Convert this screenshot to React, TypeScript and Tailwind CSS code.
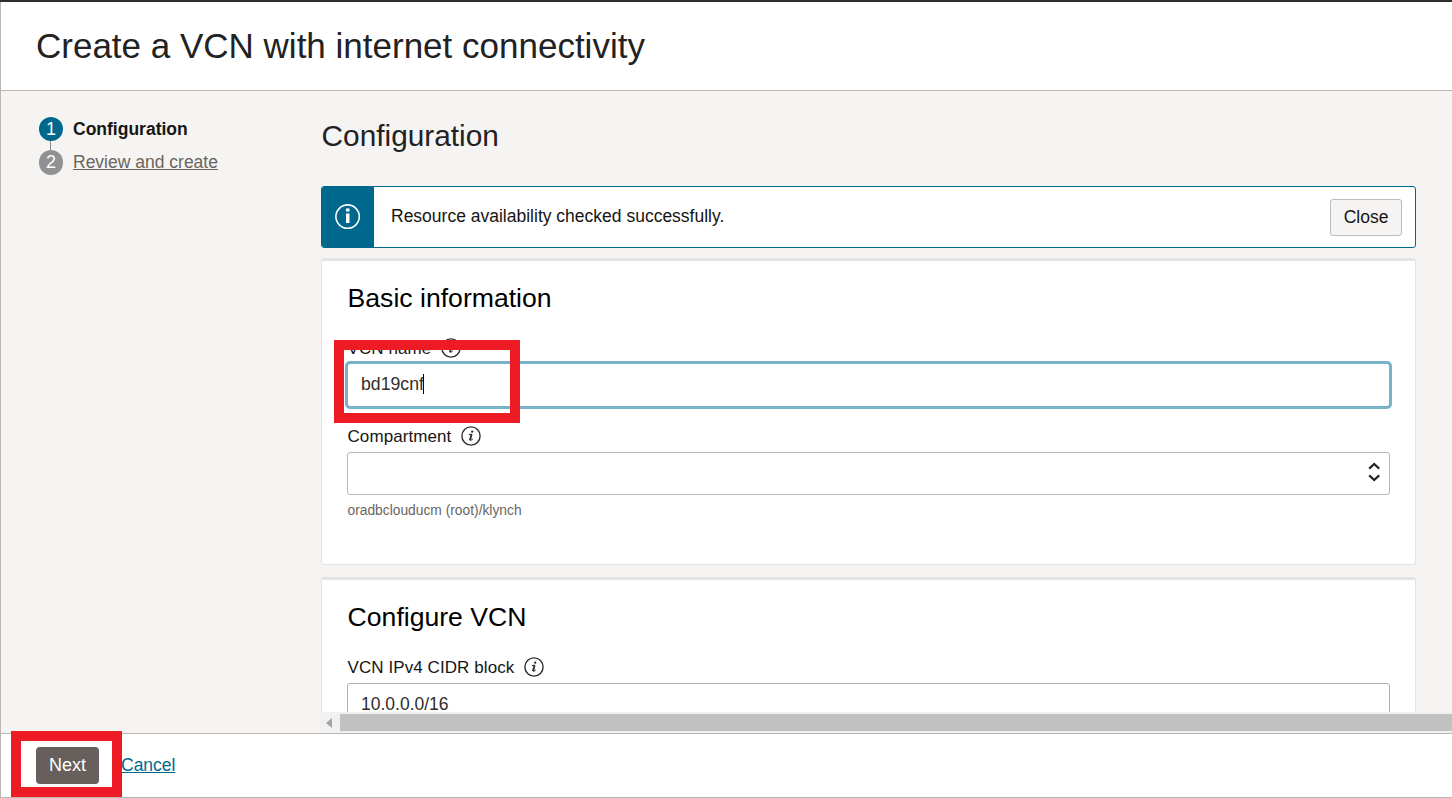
import type { ReactNode } from "react";

function InfoIcon() {
  return (
    <svg className="ml-[9.7px] h-5 w-5 shrink-0" viewBox="0 0 20 20" fill="none">
      <circle cx="10" cy="10" r="9.1" stroke="#312d2a" strokeWidth="1.4" />
      <circle cx="11.2" cy="5.6" r="1.2" fill="#312d2a" />
      <path d="M7.8 8.6 L10.6 8.2 M9.1 14.1 Q9.7 14.8 11.8 13" stroke="#312d2a" strokeWidth="1" />
      <path d="M10.6 8 L9 14.3" stroke="#312d2a" strokeWidth="1.9" />
    </svg>
  );
}

function Label({ children }: { children: ReactNode }) {
  return (
    <div className="flex h-5 items-center pl-[0.5px] text-[17px] leading-5 tracking-[0.08px] text-[#161513]">
      <span className="pt-px">{children}</span>
      <InfoIcon />
    </div>
  );
}

function Card({ title, className, children }: { title: string; className: string; children: ReactNode }) {
  return (
    <section
      className={`shrink-0 rounded-[3px] border border-t-[3px] border-[#e2e4e6] bg-white pr-[25px] pl-[25px] ${className}`}
    >
      <h3 className="pt-[21px] pl-[0.6px] text-[26.6px] leading-8 text-black">{title}</h3>
      {children}
    </section>
  );
}

function Steps() {
  return (
    <nav className="w-[320px] shrink-0 pt-[26px] pl-[38px] text-[17.5px]">
      <div className="flex h-6 items-center">
        <span className="flex h-6 w-6 items-center justify-center rounded-full bg-[#00688c] text-[18px] text-white">1</span>
        <span className="ml-[10px] font-bold text-[#161513]">Configuration</span>
      </div>
      <div className="ml-[11px] h-[9px] w-px bg-[#8b8b8b]" />
      <div className="flex h-[25px] items-center">
        <span className="flex h-[25px] w-6 items-center justify-center rounded-full bg-[#919191] text-[18px] text-white">2</span>
        <a className="ml-[10px] text-[#6b6560] underline underline-offset-1">Review and create</a>
      </div>
    </nav>
  );
}

function Notice() {
  return (
    <div className="mt-[32px] flex h-[62px] shrink-0 overflow-hidden rounded-[3px] border border-[#00688c] bg-white">
      <div className="flex w-[52px] items-center justify-center bg-[#00688c] pr-px pb-px">
        <svg className="h-[26px] w-[26px]" viewBox="0 0 26 26" fill="none">
          <circle cx="12.6" cy="12.6" r="11.7" stroke="white" strokeWidth="1.6" />
          <path d="M11 4.6h3.5v3H11zM11 9.4h3.5v9.7H11z" fill="white" />
        </svg>
      </div>
      <p className="flex-1 pt-[17px] pl-[17px] text-[17.5px] leading-6 text-[#161513]">
        Resource availability checked successfully.
      </p>
      <button className="mt-3 mr-[13px] h-[37px] w-[72px] rounded-[3px] border border-[#b9bcc0] bg-[#f5f4f2] text-[17.5px] text-[#161513]">
        Close
      </button>
    </div>
  );
}

export default function App() {
  return (
    <div className="relative flex h-[798px] w-full flex-col overflow-hidden border-t-2 border-t-[#312d2a] bg-white font-['Liberation_Sans',Arial,sans-serif]">
      <div className="flex min-h-0 flex-1 flex-col border-b border-l border-[#bcb6b1]">
        <header className="h-[89px] shrink-0 border-b border-[#bcb6b1] pt-[22px] pl-[35px]">
          <h1 className="text-[35px] leading-[44px] text-[#222]">Create a VCN with internet connectivity</h1>
        </header>

        <div className="flex h-[642px] shrink-0 bg-[#f5f4f2]">
          <Steps />
          <main className="flex min-w-0 flex-1 flex-col">
            <div className="flex h-[621px] shrink-0 flex-col overflow-hidden pr-9">
              <h2 className="mt-[27px] pl-[0.6px] text-[29.8px] leading-9 text-[#222]">Configuration</h2>
              <Notice />
              <Card title="Basic information" className="mt-[10px] h-[307px]">
                <div className="mt-[24px]">
                  <Label>VCN name</Label>
                </div>
                <div className="-mr-[2px] -ml-[2px] mt-[3px] flex h-[48px] items-center rounded-[5px] border-[3px] border-[#78b2c9] pb-[2px] pl-[13px] text-[17.7px] text-[#312d2a]">
                  <span>bd19cnf</span>
                  <span className="-ml-px h-5 w-px bg-black" />
                </div>
                <div className="mt-[17px]">
                  <Label>Compartment</Label>
                </div>
                <div className="mt-[6px] flex h-[43px] items-center justify-end rounded-[3px] border border-[#b4b8bf] pr-[9px] pb-[3px]">
                  <svg className="h-5 w-3" viewBox="0 0 12 20" fill="none" stroke="#262626" strokeWidth="2.2">
                    <path d="M1.2 6.6 6.2 2l5 4.6M1.2 13.4 6.2 18l5-4.6" />
                  </svg>
                </div>
                <p className="mt-[6px] pl-[0.5px] text-[13.8px] leading-5 text-[#6b6560]">oradbclouducm (root)/klynch</p>
              </Card>
              <Card title="Configure VCN" className="mt-3 h-[307px]">
                <div className="mt-[24px]">
                  <Label>VCN IPv4 CIDR block</Label>
                </div>
                <div className="mt-[6px] h-[43px] rounded-[3px] border border-[#b2b0ad] pt-[8px] pl-[13px] text-[17.5px] leading-6 text-[#312d2a]">
                  10.0.0.0/16
                </div>
              </Card>
            </div>
            <div className="-ml-px flex h-[21px] items-center bg-[#f1f1f1]">
              <svg className="ml-[6px] h-[10px] w-[6px]" viewBox="0 0 6 10" fill="#a3a3a3">
                <path d="M6 0v10L0 5z" />
              </svg>
              <div className="ml-2 h-[17px] flex-1 bg-[#c1c1c1]" />
            </div>
          </main>
        </div>

        <footer className="flex min-h-0 flex-1 border-t border-[#bcb6b1] pt-[13px] pl-[35px]">
          <button className="h-[37px] w-[63px] rounded-[4px] bg-[#665f5b] text-[18px] text-white">Next</button>
          <a className="mt-[6px] ml-[22px] text-[17.5px] leading-6 text-[#00688c] underline underline-offset-1">Cancel</a>
        </footer>
      </div>

      <div className="absolute top-[338px] left-[334px] h-[83px] w-[186px] border-[10px] border-[#ed1c24]" />
      <div className="absolute top-[729px] left-[11px] h-[66px] w-[111px] border-[10px] border-[#ed1c24]" />
    </div>
  );
}
